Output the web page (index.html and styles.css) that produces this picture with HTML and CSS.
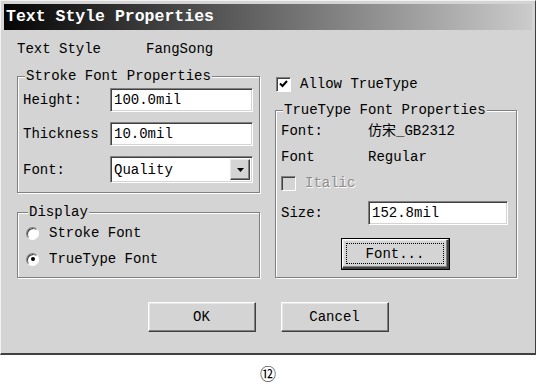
FILE: index.html
```html
<!DOCTYPE html>
<html lang="en">
<head>
    <meta charset="UTF-8">
    <meta name="viewport" content="width=device-width, initial-scale=1.0">
    <title>Text Style Properties</title>
    <link rel="stylesheet" href="styles.css">
</head>
<body>
    <div class="dialog">
        <div class="titlebar">Text Style Properties</div>

        <div class="dialog-body">
            <div class="style-row">
                <span class="style-label">Text Style</span>
                <span>FangSong</span>
            </div>

            <div class="columns">
                <!-- Left column -->
                <div class="column">
                    <fieldset class="group stroke-group">
                        <legend>Stroke Font Properties</legend>
                        <div class="field">
                            <span class="field-label">Height:</span>
                            <div class="textbox">100.0mil</div>
                        </div>
                        <div class="field">
                            <span class="field-label">Thickness</span>
                            <div class="textbox">10.0mil</div>
                        </div>
                        <div class="field">
                            <span class="field-label">Font:</span>
                            <div class="textbox select">
                                <span>Quality</span>
                                <span class="drop-btn">
                                    <svg width="7" height="4" viewBox="0 0 7 4"><path d="M0 0h7L3.5 4z" fill="#000"/></svg>
                                </span>
                            </div>
                        </div>
                    </fieldset>

                    <fieldset class="group display-group">
                        <legend>Display</legend>
                        <div class="option">
                            <span class="radio"></span>
                            <span>Stroke Font</span>
                        </div>
                        <div class="option">
                            <span class="radio checked"></span>
                            <span>TrueType Font</span>
                        </div>
                    </fieldset>
                </div>

                <!-- Right column -->
                <div class="column">
                    <div class="option allow-row">
                        <span class="checkbox">
                            <svg width="9" height="8" viewBox="0 0 9 8"><path d="M1 3.5l2.5 2.5L8 1" fill="none" stroke="#000" stroke-width="2"/></svg>
                        </span>
                        <span>Allow TrueType</span>
                    </div>

                    <fieldset class="group truetype-group">
                        <legend>TrueType Font Properties</legend>
                        <div class="info-row">
                            <span class="field-label">Font:</span>
                            <span>仿宋_GB2312</span>
                        </div>
                        <div class="info-row">
                            <span class="field-label">Font</span>
                            <span>Regular</span>
                        </div>
                        <div class="option disabled">
                            <span class="checkbox off"></span>
                            <span>Italic</span>
                        </div>
                        <div class="field size-field">
                            <span class="field-label">Size:</span>
                            <div class="textbox">152.8mil</div>
                        </div>
                        <div class="font-btn-row">
                            <button class="btn default-btn"><span class="focus">Font...</span></button>
                        </div>
                    </fieldset>
                </div>
            </div>

            <div class="button-row">
                <button class="btn">OK</button>
                <button class="btn">Cancel</button>
            </div>
        </div>
    </div>

    <div class="caption">⑫</div>
</body>
</html>
```

FILE: styles.css
```css
/* Page */
body {
    margin: 0;
    background: #fff;
    font-family: 'Liberation Mono', 'Noto Sans CJK SC', monospace;
    font-size: 14px;
    line-height: 16px;
    color: #000;
}

/* Dialog frame */
.dialog {
    width: 536px;
    box-sizing: border-box;
    background: #d4d4d4;
    border: 1px solid;
    border-color: #f2f2f2 #404040 #404040 #f2f2f2;
    border-bottom-width: 2px;
    padding: 3px;
}

.titlebar {
    height: 26px;
    padding-left: 2px;
    background: linear-gradient(to right, #050505, #cbcbcb);
    color: #fff;
    font-weight: bold;
    font-size: 16.5px;
    line-height: 26px;
}

.dialog-body {
    padding: 11px 15px 18px 13px;
}

.style-row {
    display: flex;
}

.style-label {
    width: 129px;
}

/* Two columns */
.columns {
    display: grid;
    grid-template-columns: 243px 242px;
    column-gap: 15px;
    margin-top: 11px;
}

.column {
    display: flex;
    flex-direction: column;
}

/* Group boxes */
.group {
    margin: 0;
    border: 1px solid #808080;
    box-shadow: 1px 1px 0 #fff, inset 1px 1px 0 #fff;
    min-width: 0;
}

.group legend {
    padding: 0 1px;
    margin-left: 2px;
    background: #d4d4d4;
}

.stroke-group {
    padding: 4px 6px 9px 5px;
}

.display-group {
    margin-top: 11px;
    padding: 5px 6px 8px 8px;
    flex: 1;
}

.truetype-group {
    margin-top: 10px;
    padding: 5px 6px 8px 5px;
    flex: 1;
}

/* Label + box rows */
.field {
    display: flex;
    align-items: center;
    margin-bottom: 10px;
}

.field:last-child {
    margin-bottom: 0;
}

.field-label {
    width: 87px;
    flex: none;
}

.textbox {
    flex: 1;
    height: 24px;
    box-sizing: border-box;
    background: #fff;
    border: 1px solid;
    border-color: #808080 #fff #fff #808080;
    box-shadow: inset 1px 1px 0 #404040, inset -1px -1px 0 #d4d4d4;
    padding: 3px 3px 0 3px;
}

.select {
    display: flex;
    justify-content: space-between;
    height: 27px;
    padding: 2px 2px 2px 3px;
}

.select span:first-child {
    padding-top: 3px;
}

.drop-btn {
    width: 20px;
    display: flex;
    align-items: center;
    justify-content: center;
    box-sizing: border-box;
    background: #d4d4d4;
    border: 1px solid;
    border-color: #e8e8e8 #404040 #404040 #e8e8e8;
    box-shadow: inset -1px -1px 0 #808080;
}

/* Radios and checkboxes */
.option {
    display: flex;
    align-items: center;
    height: 16px;
}

.display-group .option + .option {
    margin-top: 10px;
}

.radio {
    width: 13px;
    height: 13px;
    box-sizing: border-box;
    border-radius: 50%;
    border: 1px solid;
    border-color: #808080 #fff #fff #808080;
    background: #fff;
    box-shadow: inset 1px 1px 0 #404040;
    margin-right: 10px;
    display: flex;
    align-items: center;
    justify-content: center;
}

.radio.checked::after {
    content: '';
    width: 4px;
    height: 4px;
    border-radius: 50%;
    background: #000;
}

.checkbox {
    width: 15px;
    height: 15px;
    box-sizing: border-box;
    border: 1px solid;
    border-color: #808080 #fff #fff #808080;
    box-shadow: inset 1px 1px 0 #404040;
    background: #fff;
    margin-right: 9px;
    display: flex;
    align-items: center;
    justify-content: center;
}

.checkbox.off {
    background: #d4d4d4;
}

.allow-row {
    margin-top: 8px;
    padding-left: 1px;
}

.info-row {
    display: flex;
    height: 16px;
    margin-bottom: 10px;
}

.disabled {
    color: #8c8c8c;
    text-shadow: 1px 1px 0 #fff;
    margin-bottom: 10px;
}

.size-field {
    margin-bottom: 14px;
}

.size-field .textbox {
    flex: none;
    width: 140px;
}

/* Buttons */
.btn {
    font: inherit;
    color: #000;
    width: 108px;
    height: 30px;
    box-sizing: border-box;
    background: #d4d4d4;
    border: 1px solid;
    border-color: #fff #404040 #404040 #fff;
    box-shadow: inset -1px -1px 0 #808080, inset 1px 1px 0 #e6e6e6;
    padding: 0;
}

.font-btn-row {
    display: flex;
    justify-content: center;
}

.default-btn {
    width: 107px;
    outline: 1px solid #000;
    outline-offset: 0;
    border-width: 1px 2px 2px 1px;
    padding: 3px;
    display: flex;
}

.focus {
    flex: 1;
    border: 1px dotted #000;
    display: flex;
    align-items: center;
    justify-content: center;
}

.button-row {
    display: flex;
    justify-content: center;
    gap: 25px;
    margin-top: 24px;
    padding-left: 2px;
}

/* Figure number */
.caption {
    width: 536px;
    text-align: center;
    font-family: 'DejaVu Sans', 'Noto Sans CJK SC', sans-serif;
    font-size: 16px;
    line-height: 16px;
    margin-top: 12px;
}
```
